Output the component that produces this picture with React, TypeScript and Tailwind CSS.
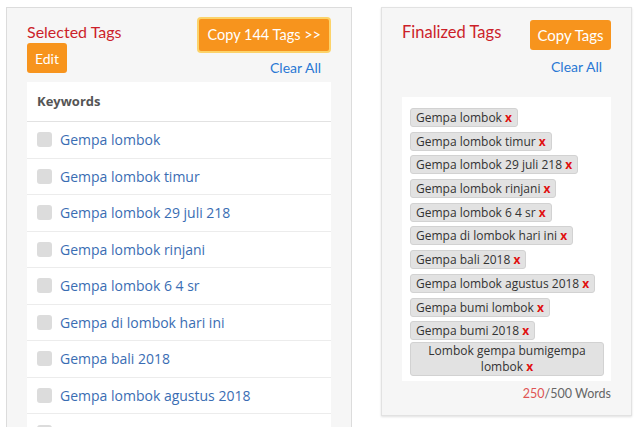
const keywords = [
  "Gempa lombok",
  "Gempa lombok timur",
  "Gempa lombok 29 juli 218",
  "Gempa lombok rinjani",
  "Gempa lombok 6 4 sr",
  "Gempa di lombok hari ini",
  "Gempa bali 2018",
  "Gempa lombok agustus 2018",
];

const tags = [
  "Gempa lombok",
  "Gempa lombok timur",
  "Gempa lombok 29 juli 218",
  "Gempa lombok rinjani",
  "Gempa lombok 6 4 sr",
  "Gempa di lombok hari ini",
  "Gempa bali 2018",
  "Gempa lombok agustus 2018",
  "Gempa bumi lombok",
  "Gempa bumi 2018",
];

export default function App() {
  return (
    <div className="h-[427px] w-[640px] overflow-hidden bg-white font-['Open_Sans',sans-serif]">
      <div className="flex items-start gap-[29px] pl-[6px] pt-[7px]">
        {/* Selected tags */}
        <div className="h-[440px] w-[346px] shrink-0 border border-[#dcdcdc] bg-[#f6f6f6] px-5 pt-[9px]">
          <div className="flex justify-between">
            <div>
              <h2 className="mt-[5px] font-['Lato',sans-serif] text-[16px] leading-[20px] text-[#cc1f2a]">Selected Tags</h2>
              <button className="mt-[1px] h-[30px] w-[40px] rounded-[3px] bg-[#f7941d] font-['Lato',sans-serif] text-[14px] text-white">
                Edit
              </button>
            </div>
            <div className="flex flex-col items-end">
              <button className="h-[36px] rounded-[4px] border-2 border-[#fcd36a] bg-[#f7941d] px-[8px] font-['Lato',sans-serif] text-[14.5px] text-white">
                Copy 144 Tags &gt;&gt;
              </button>
              <a className="mr-[10px] mt-[6px] font-['Lato',sans-serif] text-[14px] leading-[18px] text-[#2a78d4]">Clear All</a>
            </div>
          </div>
          <div className="mt-[5px] bg-white">
            <div className="flex h-[40px] items-center border-b border-[#e2e2e2] pl-[10px] text-[13px] font-bold text-[#555]">
              Keywords
            </div>
            {keywords.map((k) => (
              <div key={k} className="flex h-[36.5px] items-center gap-[8px] border-b border-[#ececec] pl-[10px]">
                <span className="h-[15px] w-[15px] rounded-[3px] bg-[#dcdcdc]" />
                <span className="text-[14px] text-[#3a6db3]">{k}</span>
              </div>
            ))}
            {/* next row, only its checkbox shows above the fold */}
            <div className="flex h-[36.5px] items-center pl-[10px]">
              <span className="h-[15px] w-[15px] rounded-[3px] bg-[#dcdcdc]" />
            </div>
          </div>
        </div>

        {/* Finalized tags */}
        <div className="w-[251px] shrink-0 border border-[#e2e2e2] bg-[#f6f6f6] px-5 pb-[11px] pt-[12px] shadow-[0_1px_2px_rgba(0,0,0,0.12)]">
          <div className="flex justify-between">
            <h2 className="mt-[2px] font-['Lato',sans-serif] text-[16.5px] leading-[20px] text-[#cc1f2a]">Finalized Tags</h2>
            <div className="flex flex-col items-end">
              <button className="h-[30px] w-[81px] rounded-[3px] bg-[#f7941d] font-['Lato',sans-serif] text-[15px] text-white">
                Copy Tags
              </button>
              <a className="mr-[9px] mt-[8px] font-['Lato',sans-serif] text-[14px] leading-[18px] text-[#2a78d4]">Clear All</a>
            </div>
          </div>
          <div className="mt-[21px] bg-white pb-[5px] pl-[8px] pr-[7px] pt-[11px]">
            {tags.map((t) => (
              <div
                key={t}
                className="mb-[4.7px] w-fit rounded-[3px] border border-[#d2d2d2] bg-[#e2e2e2] px-[5px] text-[12px] leading-[17px] text-[#333]"
              >
                {t} <span className="font-bold text-[#e01010]">x</span>
              </div>
            ))}
            <div className="mt-[-3px] rounded-[3px] border border-[#d2d2d2] bg-[#e2e2e2] px-[5px] text-center text-[12px] leading-[16px] text-[#333]">
              <div>Lombok gempa bumigempa</div>
              <div>
                lombok <span className="font-bold text-[#e01010]">x</span>
              </div>
            </div>
          </div>
          <div className="mt-[3px] text-right font-['Lato',sans-serif] text-[12.5px] leading-[20px] text-[#666]">
            <span className="text-[#e05454]">250</span>/500 Words
          </div>
        </div>
      </div>
    </div>
  );
}
